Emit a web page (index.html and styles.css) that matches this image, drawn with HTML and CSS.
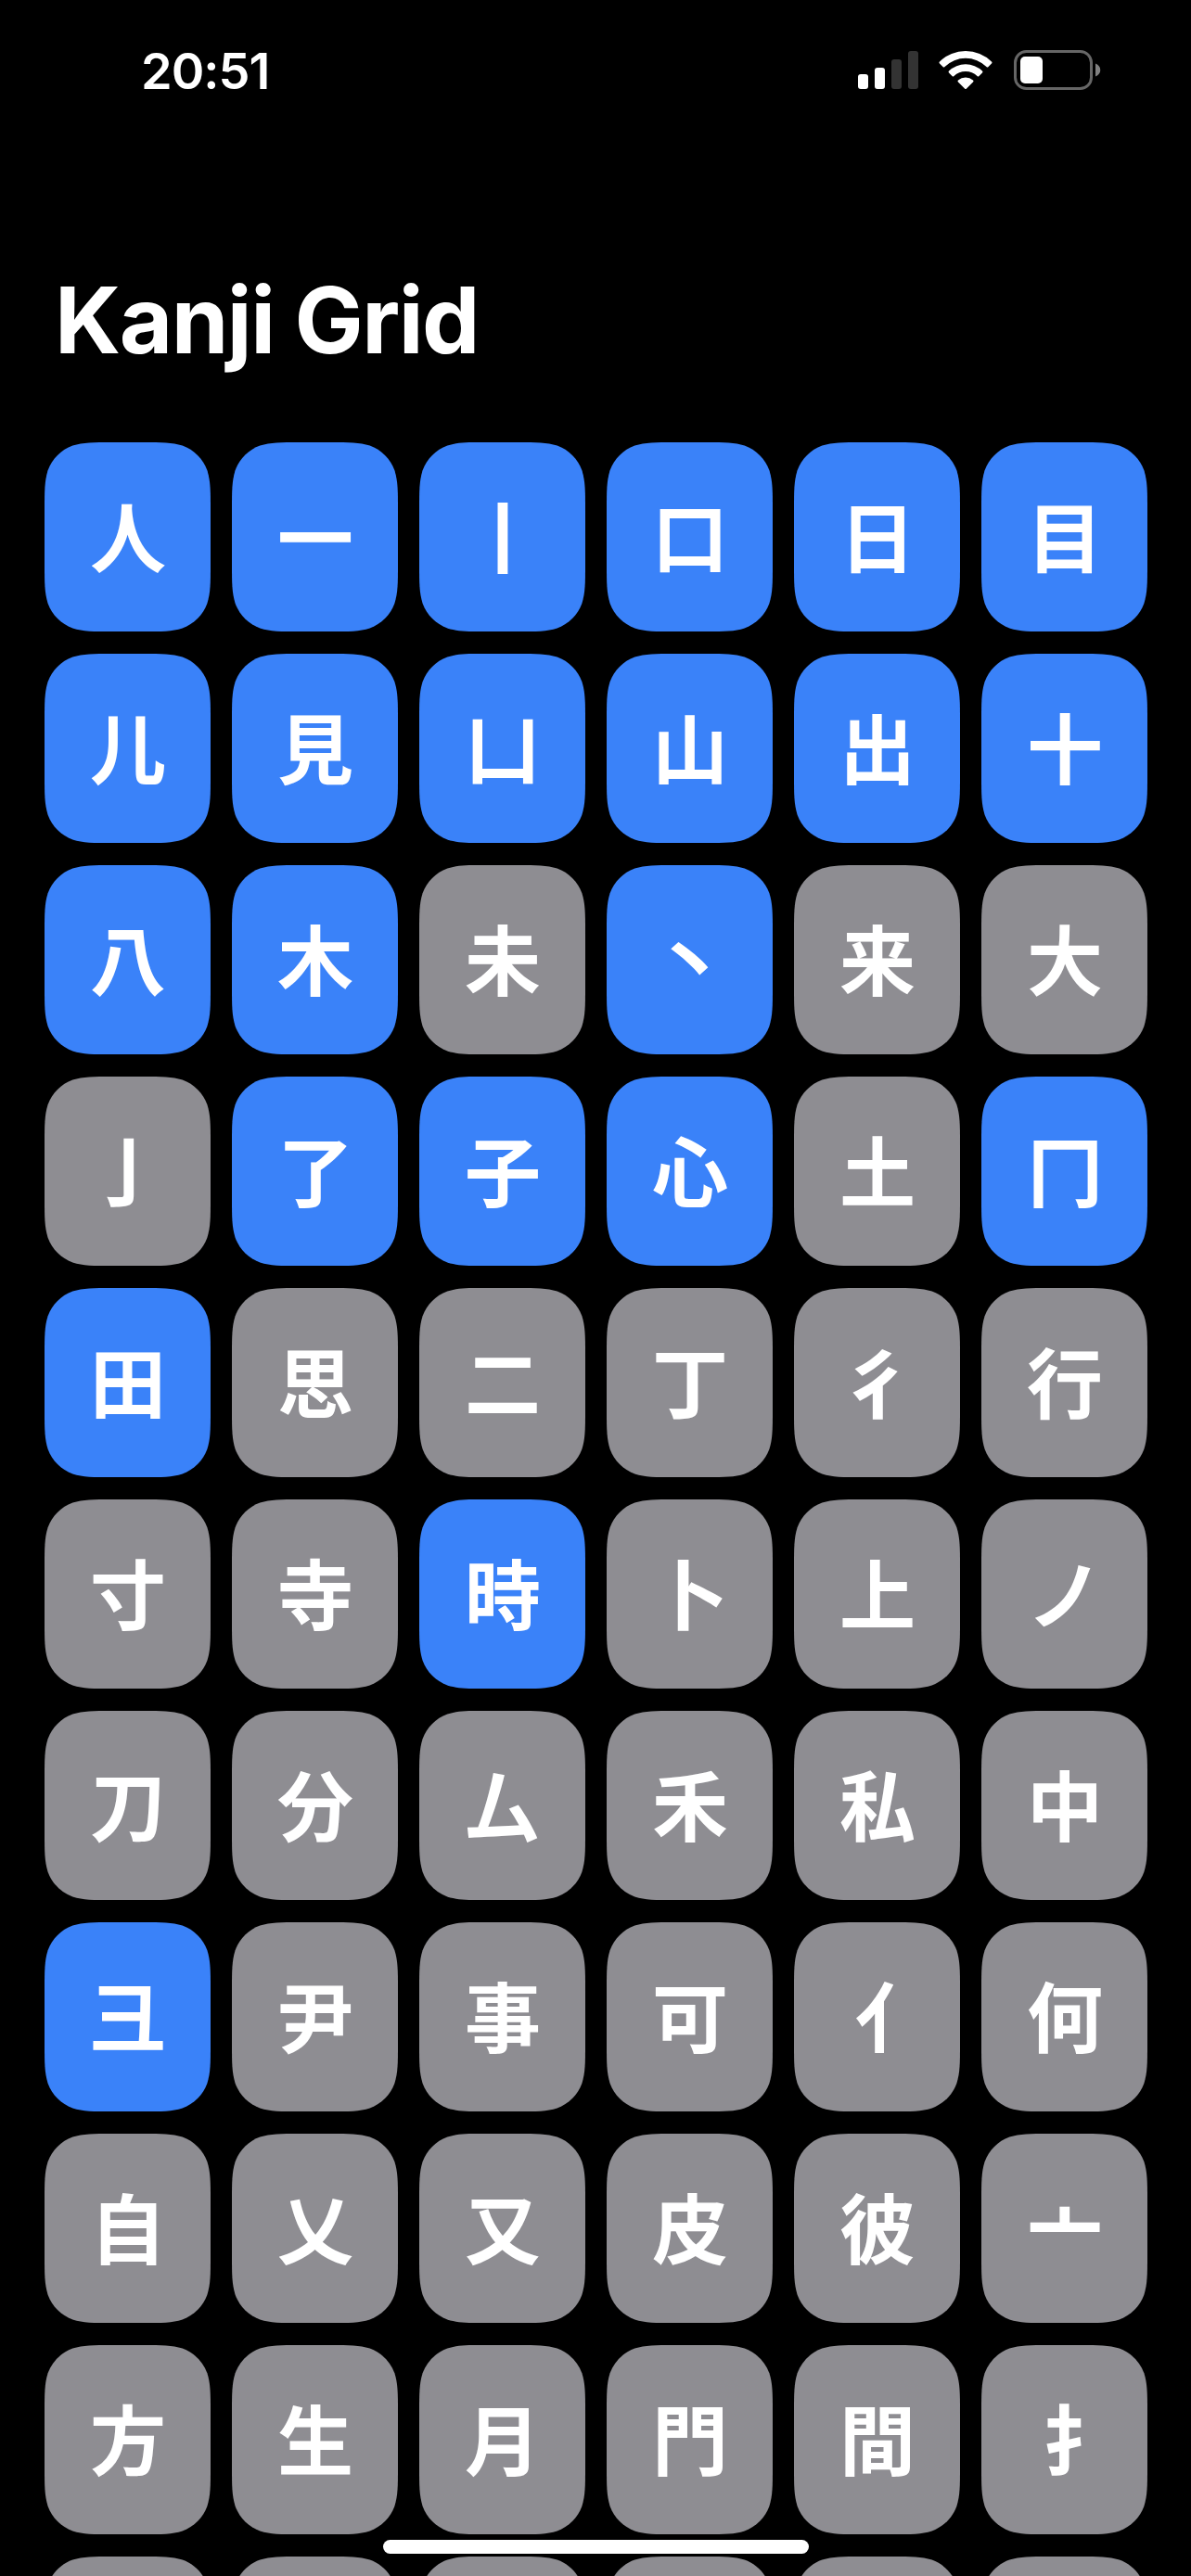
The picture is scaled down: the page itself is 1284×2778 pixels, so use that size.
FILE: index.html
```html
<!DOCTYPE html>
<html lang="ja">
<head>
<meta charset="utf-8">
<title>Kanji Grid</title>
<link rel="stylesheet" href="styles.css">
</head>
<body>
<div class="screen">
  <header class="status">
    <time class="clock">20:51</time>
    <div class="indicators">
      <svg class="signal" width="66" height="42" viewBox="0 0 66 42">
        <rect x="0" y="25" width="11" height="16" rx="3" fill="#fff"/>
        <rect x="18" y="18" width="11" height="23" rx="3" fill="#fff"/>
        <rect x="36" y="9" width="11" height="32" rx="3" fill="#333"/>
        <rect x="54" y="0" width="11" height="41" rx="3" fill="#333"/>
      </svg>
      <svg class="wifi" width="58" height="42" viewBox="0 0 58 42">
        <path d="M1 12.500A40 40 0 0 1 57 12.500Q58 13.500 57 14.500L53.500 18Q52.500 19 51.500 18A32 32 0 0 0 6.500 18Q5.500 19 4.500 18L1 14.500Q0 13.500 1 12.500Z" fill="#fff"/>
        <path d="M11 22.500A26 26 0 0 1 47 22.500Q48 23.500 47 24.500L43.500 28Q42.500 29 41.500 28A18 18 0 0 0 16.500 28Q15.500 29 14.500 28L11 24.500Q10 23.500 11 22.500Z" fill="#fff"/>
        <path d="M21 32.500A12 12 0 0 1 37 32.500Q38 33.500 37 34.500L30 41.500Q29 42.500 28 41.500L21 34.500Q20 33.500 21 32.500Z" fill="#fff"/>
      </svg>
      <svg class="battery" width="95" height="43" viewBox="0 0 95 43">
        <rect x="1.500" y="1.500" width="82" height="40" rx="12" fill="none" stroke="#666" stroke-width="3"/>
        <rect x="7" y="7" width="24" height="29" rx="5" fill="#fff"/>
        <path d="M88 14.500C95 17 95 26 88 28.500Z" fill="#808080"/>
      </svg>
    </div>
  </header>
  <h1 class="title">Kanji Grid</h1>
  <main class="grid" id="grid"></main>
  <div class="home-indicator"></div>
</div>
<script src="grid.js"></script>
</body>
</html>
```
FILE: grid.js
```js
// An asterisk after a character marks it as learned.
const rows = [
  "人*一*丨*口*日*目*",
  "儿*見*凵*山*出*十*",
  "八*木*未丶*来大",
  "亅了*子*心*土冂*",
  "田*思二丁彳行",
  "寸寺時*卜上ノ",
  "刀分厶禾私中",
  "彐*尹事可亻何",
  "自乂又皮彼亠",
  "方生月門間扌",
  "      "
];
// Left-hand radicals sit at the left of their em box and need centring.
const leftRadicals = "亻扌";
const grid = document.getElementById("grid");
for (const [, kanji, learned] of rows.join("").matchAll(/([^*])(\*?)/gu)) {
  const tile = document.createElement("div");
  tile.className = "tile";
  if (learned) tile.classList.add("learned");
  if (leftRadicals.includes(kanji)) tile.classList.add("radical");
  tile.textContent = kanji;
  grid.append(tile);
}
```
FILE: styles.css
```css
body {
  margin: 0;
  background: #000;
}

.screen {
  position: relative;
  width: 1284px;
  height: 2778px;
  overflow: hidden;
  background: #000;
  color: #fff;
  font-family: Inter, "Liberation Sans", sans-serif;
}

.status {
  box-sizing: border-box;
  height: 141px;
  padding: 54px 96px 0 152px;
  display: flex;
  justify-content: space-between;
}

.clock {
  font-size: 54px;
  line-height: 46px;
  font-weight: 600;
  letter-spacing: -1px;
}

.indicators {
  display: flex;
  align-items: flex-start;
}

.signal { margin-top: 1px; }
.wifi { margin-left: 21px; }
.battery { margin-left: 23px; }

.title {
  height: 336px;
  margin: 0;
  padding: 138px 59px 0;
  box-sizing: border-box;
  font-size: 99px;
  line-height: 132px;
  font-weight: 700;
  letter-spacing: -1.5px;
}

.grid {
  display: grid;
  grid-template-columns: repeat(6, 179px);
  grid-auto-rows: 204px;
  gap: 24px 23px;
  padding-left: 48px;
}

/* Continuous-curvature corners, 48px radius */
.tile {
  box-sizing: border-box;
  display: flex;
  align-items: center;
  justify-content: center;
  padding: 0 0 7px 1px;
  background: #8e8d92;
  font-family: "Noto Sans CJK JP", sans-serif;
  font-size: 82px;
  font-weight: 700;
  line-height: 196px;
  clip-path: path("M73.400 0H105.600C126.800 0 137.300 0 148.700 3.600C161.100 8.100 170.900 17.900 175.400 30.300C179 41.700 179 52.200 179 73.400V130.600C179 151.800 179 162.300 175.400 173.700C170.900 186.100 161.100 195.900 148.700 200.400C137.300 204 126.800 204 105.600 204H73.400C52.200 204 41.700 204 30.300 200.400C17.900 195.900 8.100 186.100 3.600 173.700C0 162.300 0 151.800 0 130.600V73.400C0 52.200 0 41.700 3.600 30.300C8.100 17.900 17.900 8.100 30.300 3.600C41.700 0 52.200 0 73.400 0Z");
}

.learned { background: #3a82f9; }
.radical { padding-left: 34px; }

.home-indicator {
  position: absolute;
  left: 413px;
  bottom: 24px;
  width: 459px;
  height: 15px;
  border-radius: 8px;
  background: #fff;
}
```
